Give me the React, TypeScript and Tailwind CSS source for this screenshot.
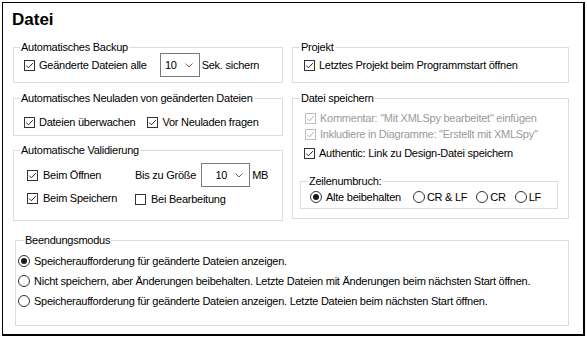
import React from 'react';

const font = "font-['Liberation_Sans',Arial,sans-serif]";

function Check({ checked = true, disabled = false }: { checked?: boolean; disabled?: boolean }) {
  const c = disabled ? '#c0c0c0' : '#333333';
  return (
    <svg width="11" height="11" viewBox="0 0 11 11" className="shrink-0">
      <rect x="0.5" y="0.5" width="10" height="10" fill="#fff" stroke={c} />
      {checked && <path d="M2.2 5.6 L4.4 7.8 L8.8 3.2" fill="none" stroke={disabled ? '#b0b0b0' : '#222'} strokeWidth="1" />}
    </svg>
  );
}

function Radio({ on = false }: { on?: boolean }) {
  return (
    <svg width="12" height="12" viewBox="0 0 12 12" className="shrink-0">
      <circle cx="6" cy="6" r="5.5" fill="#fff" stroke="#333" />
      {on && <circle cx="6" cy="6" r="3" fill="#1a1a1a" />}
    </svg>
  );
}

function Combo({ w }: { w: string }) {
  return (
    <div className={`${w} h-[24px] border border-[#7a7a7a] bg-white flex items-center justify-end pr-[6px] gap-[8px]`}>
      <span>10</span>
      <svg width="8" height="5" viewBox="0 0 8 5">
        <path d="M0.5 0.5 L4 4 L7.5 0.5" fill="none" stroke="#666" strokeWidth="1" />
      </svg>
    </div>
  );
}

function Group({ title, className, legend = 'ml-[6px]', children }: { title: string; className: string; legend?: string; children?: React.ReactNode }) {
  return (
    <div className={`border border-[#dcdcdc] ${className}`}>
      <div className={`-mt-[8px] h-[14px] leading-[14px] w-fit bg-white px-[1px] ${legend}`}>{title}</div>
      {children}
    </div>
  );
}

function Item({ label, checked = true, disabled = false, gap = 'gap-[4px]' }: { label: string; checked?: boolean; disabled?: boolean; gap?: string }) {
  return (
    <div className={`flex items-center ${gap} ${disabled ? 'text-[#9a9a9a]' : ''}`}>
      <Check checked={checked} disabled={disabled} />
      <span>{label}</span>
    </div>
  );
}

export default function App() {
  return (
    <div className={`w-[587px] h-[338px] bg-white p-[2px] text-[11px] tracking-[-0.25px] text-black ${font}`}>
      <div className="w-[583px] h-[334px] border-l border-t border-r-2 border-b-2 border-black flex flex-col">
        <h1 className="mt-[7px] ml-[9px] h-[20px] leading-[20px] text-[17px] font-bold tracking-normal">Datei</h1>

        <div className="mt-[17px] pl-[10px] flex gap-[9px]">
          {/* left column */}
          <div className="w-[270px] flex flex-col">
            <Group title="Automatisches Backup" className="h-[36px]">
              <div className="-mt-[1px] h-[24px] flex items-center pl-[10px]">
                <Item label="Geänderte Dateien alle" />
                <div className="ml-[13px]"><Combo w="w-[40px]" /></div>
                <span className="ml-[2px]">Sek. sichern</span>
              </div>
            </Group>

            <Group title="Automatisches Neuladen von geänderten Dateien" className="mt-[15px] h-[38px]">
              <div className="mt-[10px] h-[14px] flex items-center pl-[10px] gap-[12px]">
                <Item label="Dateien überwachen" />
                <Item label="Vor Neuladen fragen" />
              </div>
            </Group>

            <Group title="Automatische Validierung" className="mt-[14px] h-[71px]">
              <div className="mt-[6px] flex pl-[13px]">
                <div className="w-[108px] flex flex-col">
                  <div className="h-[24px] flex items-center"><Item label="Beim Öffnen" gap="gap-[5px]" /></div>
                  <div className="h-[22px] flex items-center"><Item label="Beim Speichern" gap="gap-[5px]" /></div>
                </div>
                <div className="flex flex-col">
                  <div className="h-[24px] flex items-center">
                    <span>Bis zu Größe</span>
                    <div className="ml-[5px]"><Combo w="w-[49px]" /></div>
                    <span className="ml-[2px]">MB</span>
                  </div>
                  <div className="h-[24px] flex items-center"><Item label="Bei Bearbeitung" gap="gap-[5px]" checked={false} /></div>
                </div>
              </div>
            </Group>
          </div>

          {/* right column */}
          <div className="w-[277px] flex flex-col">
            <Group title="Projekt" className="h-[36px]" legend="ml-[7px]">
              <div className="-mt-[1px] h-[24px] flex items-center pl-[11px]">
                <Item label="Letztes Projekt beim Programmstart öffnen" />
              </div>
            </Group>

            <Group title="Datei speichern" className="mt-[15px] h-[121px]" legend="ml-[7px]">
              <div className="mt-[5px] pl-[12px] flex flex-col">
                <div className="h-[16px] flex items-center"><Item label={'Kommentar: "Mit XMLSpy bearbeitet" einfügen'} disabled /></div>
                <div className="h-[16px] flex items-center"><Item label={'Inkludiere in Diagramme: "Erstellt mit XMLSpy"'} disabled /></div>
                <div className="mt-[3px] h-[16px] flex items-center -ml-[1px]"><Item label="Authentic: Link zu Design-Datei speichern" /></div>
              </div>
              <Group title="Zeilenumbruch:" className="mt-[20px] ml-[7px] mr-[10px] h-[28px]" legend="ml-[7px]">
                <div className="h-[18px] flex items-center pl-[9px]">
                  <div className="flex items-center gap-[4px]"><Radio on /><span>Alte beibehalten</span></div>
                  <div className="ml-[12px] flex items-center gap-[2px]"><Radio /><span>CR &amp; LF</span></div>
                  <div className="ml-[9px] flex items-center gap-[2px]"><Radio /><span>CR</span></div>
                  <div className="ml-[9px] flex items-center gap-[2px]"><Radio /><span>LF</span></div>
                </div>
              </Group>
            </Group>
          </div>
        </div>

        <Group title="Beendungsmodus" className="mt-[19px] ml-[12px] w-[554px] h-[86px]" legend="ml-[8px]">
          <div className="mt-[4px] pl-[2px] flex flex-col">
            {[
              'Speicheraufforderung für geänderte Dateien anzeigen.',
              'Nicht speichern, aber Änderungen beibehalten. Letzte Dateien mit Änderungen beim nächsten Start öffnen.',
              'Speicheraufforderung für geänderte Dateien anzeigen. Letzte Dateien beim nächsten Start öffnen.',
            ].map((t, i) => (
              <div key={i} className="h-[20px] flex items-center gap-[4px]">
                <Radio on={i === 0} />
                <span>{t}</span>
              </div>
            ))}
          </div>
        </Group>
      </div>
    </div>
  );
}
